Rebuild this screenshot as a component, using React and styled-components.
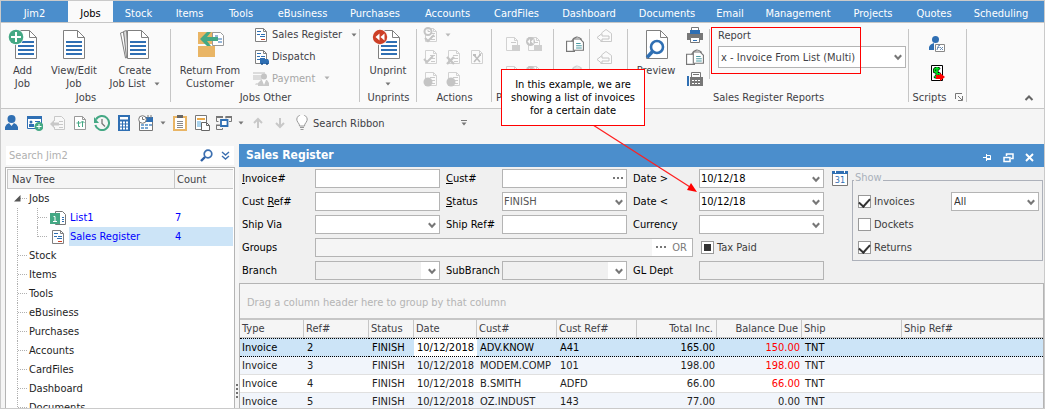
import styled, { createGlobalStyle } from "styled-components";

const theme = {
  blue: "#4b8ecc",
  ink: "#3f3f46",
  iconBlue: "#2f6fb3",
  iconGray: "#808080",
  green: "#44a884",
  line: "#c6c6c6",
  field: "#b4b4b4",
  select: "#cce4f7",
};

const GlobalStyle = createGlobalStyle`
  * {
    box-sizing: border-box;
  }
  body {
    margin: 0;
    font-family: "DejaVu Sans Condensed", "Noto Sans", sans-serif;
    font-size: 11px;
    line-height: 13px;
    color: ${theme.ink};
  }
  button, input, select {
    font: inherit;
    color: inherit;
  }
  svg {
    display: block;
    flex: none;
  }
`;

const Window = styled.div`
  position: relative;
  display: flex;
  flex-direction: column;
  height: 100vh;
  overflow: hidden;
  border: 1px solid #cacaca;
  background: #f5f5f5;
  white-space: nowrap;
`;

/* ---------- tabs ---------- */
const TabBar = styled.nav`
  display: flex;
  height: 21px;
  flex: none;
  background: ${theme.blue};
`;
const Tab = styled.button`
  border: none;
  padding: 4px 0 0;
  width: ${(props) => props.$width}px;
  text-align: center;
  background: ${(props) => (props.$active ? "#fafafa" : "transparent")};
  color: ${(props) => (props.$active ? "#000" : "#fff")};
`;

/* ---------- ribbon ---------- */
const Ribbon = styled.header`
  display: flex;
  height: 87px;
  flex: none;
  background: #fafafa;
  border-top: 1px solid ${theme.line};
  border-bottom: 1px solid ${theme.line};
`;
const Group = styled.section`
  position: relative;
  display: flex;
  flex-direction: column;
  width: ${(props) => props.$width}px;
  flex: none;
  &::after {
    content: "";
    position: absolute;
    right: 0;
    top: 6px;
    bottom: 6px;
    border-right: 1px solid ${theme.line};
  }
`;
const GroupBody = styled.div`
  display: flex;
  flex: 1;
  min-height: 0;
`;
const GroupTitle = styled.div`
  display: flex;
  justify-content: ${(props) => (props.$start ? "flex-start" : "center")};
  align-items: center;
  gap: 9px;
  height: 16px;
  margin-bottom: 3px;
  padding-left: ${(props) => (props.$start ? 4 : 0)}px;
`;
const BigButton = styled.button`
  display: flex;
  flex-direction: column;
  align-items: center;
  width: ${(props) => props.$width}px;
  padding: 5px 0 0;
  border: none;
  background: none;
  white-space: pre;
  svg + span {
    margin-top: 4px;
  }
`;
const ButtonText = styled.span`
  display: flex;
  align-items: center;
  gap: ${(props) => props.$gap || 0}px;
`;
const SmallColumn = styled.div`
  display: flex;
  flex-direction: column;
  padding: 1px 0 0 ${(props) => props.$indent || 0}px;
`;
const SmallButton = styled.button`
  display: flex;
  align-items: center;
  gap: 3px;
  height: 22px;
  padding: 0;
  border: none;
  background: none;
  color: ${(props) => (props.disabled ? "#a6a6a6" : "inherit")};
  svg + svg,
  span + svg {
    margin-left: 6px;
  }
`;
const IconGrid = styled.div`
  display: grid;
  grid-template-columns: repeat(${(props) => props.$cols}, ${(props) => props.$cell || 22}px);
  grid-auto-rows: ${(props) => props.$row || 22}px;
  padding: ${(props) => props.$pad};
`;
const IconButton = styled.button`
  display: flex;
  align-items: center;
  justify-content: ${(props) => (props.$start ? "flex-start" : "center")};
  padding: 0 0 0 ${(props) => (props.$start ? 3 : 0)}px;
  border: none;
  background: none;
  opacity: ${(props) => (props.disabled ? 0.32 : 1)};
`;
const Divider = styled.div`
  width: 1px;
  height: 50px;
  margin-top: 6px;
  background: ${theme.line};
`;
const ReportField = styled.div`
  display: flex;
  flex-direction: column;
  gap: 4px;
  width: 188px;
  margin-left: 8px;
  padding-top: 6px;
`;
const Collapse = styled.button`
  margin: auto 9px 4px auto;
  padding: 0;
  width: 12px;
  height: 12px;
  border: none;
  background: none;
`;

/* ---------- quick access bar ---------- */
const QuickBar = styled.div`
  display: flex;
  align-items: center;
  height: 28px;
  flex: none;
`;
const QuickButton = styled.button`
  display: flex;
  align-items: center;
  justify-content: center;
  width: ${(props) => props.$width || 22}px;
  height: 22px;
  padding: 0;
  border: none;
  background: none;
`;
const RibbonSearch = styled.span`
  width: 145px;
`;

/* ---------- body ---------- */
const Body = styled.div`
  display: flex;
  flex: 1;
  min-height: 0;
  padding-top: 7px;
`;
const Sidebar = styled.aside`
  display: flex;
  flex-direction: column;
  width: 230px;
  margin-left: 4px;
  flex: none;
  padding-top: 2px;
`;
const SearchBox = styled.div`
  display: flex;
  align-items: center;
  height: 19px;
  margin: 0 1px 2px;
  padding-right: 4px;
  gap: 8px;
  background: #fff;
  input {
    flex: 1;
    min-width: 0;
    padding: 0 3px;
    border: none;
    background: none;
    outline: none;
  }
  input::placeholder {
    color: #b0b0b0;
    opacity: 1;
  }
`;
const Tree = styled.div`
  flex: 1;
  min-height: 0;
  overflow: hidden;
  border: 1px solid ${theme.field};
  border-bottom: none;
  background: #fff;
`;
const TreeHead = styled.div`
  display: grid;
  grid-template-columns: 166px 1fr;
  height: 20px;
  margin: 1px 1px 0;
  border: 1px solid ${theme.line};
  border-right: none;
  background: #f5f5f5;
  span {
    padding: 3px 0 0 4px;
  }
  span + span {
    padding-left: 2px;
    border-left: 1px solid ${theme.line};
  }
`;
const TreeRow = styled.div`
  display: flex;
  height: 19px;
  color: #1e1e1e;
`;
const Guide = styled.span`
  position: relative;
  width: 10px;
  margin-left: ${(props) => props.$indent}px;
  height: ${(props) => (props.$last ? 10 : 19)}px;
  border-left: 1px dotted ${(props) => (props.$bare ? "transparent" : "#b0b0b0")};
  &::after {
    content: "";
    position: absolute;
    left: 0;
    top: 9px;
    width: 9px;
    border-top: 1px dotted #b0b0b0;
  }
  svg {
    position: absolute;
    left: -4px;
    top: 6px;
    z-index: 1;
  }
`;
const Trunk = styled.span`
  width: 20px;
  margin-left: 11px;
  border-left: 1px dotted #b0b0b0;
`;
const TreeText = styled.span`
  padding: 3px 0 0 2px;
`;
const LeafIcon = styled.span`
  display: flex;
  align-items: center;
  justify-content: center;
  width: 22px;
`;
const LeafText = styled.span`
  display: grid;
  grid-template-columns: 105px 1fr;
  flex: 1;
  margin-right: 1px;
  padding: 3px 0 0 1px;
  color: #0000ff;
  background: ${(props) => (props.$selected ? theme.select : "transparent")};
`;
const Splitter = styled.div`
  display: flex;
  flex-direction: column;
  align-items: center;
  justify-content: flex-end;
  gap: 2px;
  width: 4px;
  padding-bottom: 10px;
  span {
    width: 2px;
    height: 2px;
    background: #707070;
  }
`;

const Main = styled.main`
  display: flex;
  flex-direction: column;
  flex: 1;
  min-width: 0;
`;
const TitleBar = styled.div`
  display: flex;
  align-items: center;
  height: 23px;
  flex: none;
  padding: 0 10px 0 7px;
  background: ${theme.blue};
  color: #fff;
  h1 {
    flex: 1;
    margin: 0;
    font-size: 12px;
    font-weight: 700;
  }
`;
const WindowButtons = styled.div`
  display: flex;
  align-items: center;
  gap: 11px;
  padding-top: 4px;
  button {
    padding: 0;
    border: none;
    background: none;
  }
`;
const Filters = styled.form`
  display: flex;
  height: 116px;
  flex: none;
  padding: 2px 0 0 3px;
  background: #f0f0f0;
  color: #000;
`;
const Fields = styled.div`
  display: grid;
  grid-template-columns: 67px 125px 50px 125px 60px 125px;
  grid-auto-rows: 19px;
  gap: 4px 6px;
  label {
    padding-top: 3px;
  }
`;
const TextInput = styled.input`
  width: 100%;
  height: 19px;
  padding: 0 2px;
  border: 1px solid ${theme.field};
  background: ${(props) => (props.disabled ? "#f0f0f0" : "#fff")};
  outline: none;
`;
const SelectBox = styled.span`
  position: relative;
  display: block;
  height: ${(props) => props.$height || 19}px;
  select {
    appearance: none;
    width: 100%;
    height: 100%;
    padding: 0 18px 0 ${(props) => (props.$indent ? 2 : 1)}px;
    border: 1px solid ${theme.field};
    border-radius: 0;
    outline: none;
    opacity: 1;
    background: ${(props) =>
      props.$off ? "linear-gradient(to left, #fff 18px, #f0f0f0 18px)" : "#fff"};
    color: ${(props) => props.$color || "#000"};
  }
  svg {
    position: absolute;
    right: 4px;
    top: calc(50% - 3px);
    pointer-events: none;
  }
`;
const DotsBox = styled.span`
  position: relative;
  display: block;
  button {
    position: absolute;
    right: 3px;
    top: 8px;
    padding: 0;
    border: none;
    background: none;
  }
`;
const GroupsBox = styled.span`
  display: flex;
  grid-column: span 4;
  height: 19px;
  border: 1px solid ${theme.field};
  background: #fff;
  color: #7a7a7a;
  input {
    flex: 1;
    min-width: 0;
    border: none;
    background: #f5f5f5;
  }
  button {
    display: flex;
    align-items: center;
    gap: 5px;
    padding: 0 5px 0 4px;
    border: none;
    background: none;
  }
`;
const Check = styled.label`
  display: flex;
  align-items: center;
  gap: 3px;
  color: #3c3c3c;
  input {
    appearance: none;
    display: grid;
    place-items: center;
    width: 13px;
    height: 13px;
    margin: 0;
    border: 1px solid #999;
    background: #fff;
  }
  input:checked::after {
    content: "";
    width: 5px;
    height: 9px;
    margin-bottom: 3px;
    border: solid #333;
    border-width: 0 2px 2px 0;
    transform: rotate(42deg);
  }
  &.mixed {
    padding: 0 0 0 2px;
  }
  &.mixed input::after {
    width: 7px;
    height: 7px;
    margin: 0;
    border: none;
    background: #333;
    transform: none;
  }
`;
const CalendarButton = styled.button`
  align-self: flex-start;
  margin: 1px 4px 0 8px;
  padding: 0;
  border: none;
  background: none;
`;
const Show = styled.fieldset`
  flex: 1;
  align-self: flex-start;
  display: grid;
  grid-template-columns: 89px 1fr;
  grid-auto-rows: 19px;
  gap: 4px;
  min-width: 0;
  height: 90px;
  margin: 2px 1px 0 0;
  padding: 2px 3px 0 5px;
  border: 1px solid #adb1ba;
  legend {
    margin-left: -4px;
    padding: 0 1px 6px;
    color: #a9b0bb;
  }
`;

/* ---------- grid ---------- */
const GridPanel = styled.div`
  flex: 1;
  min-height: 0;
  overflow: hidden;
  border: 1px solid ${theme.field};
  border-bottom: none;
  background: #fff;
`;
const GroupHint = styled.div`
  height: 36px;
  padding: 12px 0 0 7px;
  border-bottom: 2px solid ${theme.line};
  background: #f5f5f5;
  color: #b4b4b4;
`;
const Table = styled.table`
  width: 100%;
  table-layout: fixed;
  border-collapse: separate;
  border-spacing: 0;
  th {
    height: 18px;
    padding: 0 3px 0 2px;
    border-right: 1px solid ${theme.line};
    border-bottom: 1px solid ${theme.line};
    background: #f5f5f5;
    font-weight: 400;
    text-align: left;
  }
  th:last-child {
    border-right: none;
  }
  td {
    height: 18px;
    padding: 0 2px 0 3px;
    border-bottom: 1px solid #e0e0e0;
    color: #1e1e1e;
  }
  th:first-child,
  td:first-child {
    padding-left: 2px;
  }
  th.num,
  td.num {
    text-align: right;
  }
`;
const DataRow = styled.tr`
  background: ${(props) => (props.$selected ? theme.select : props.$alt ? "#f1f5fb" : "#fff")};
  && td {
    ${(props) =>
      props.$selected &&
      "height: 19px; border-top: 1px dotted #000; border-bottom: 1px dotted #000; color: #000;"}
  }
  && td:nth-child(4) {
    ${(props) => props.$selected && "background: #fff;"}
  }
  && td.due {
    color: #ff0000;
  }
`;

/* ---------- annotations ---------- */
const Highlight = styled.div`
  position: absolute;
  left: 710px;
  top: 26px;
  width: 150px;
  height: 47px;
  border: 1px solid #ff0000;
  pointer-events: none;
`;
const Callout = styled.div`
  position: absolute;
  left: 500px;
  top: 68px;
  width: 144px;
  padding: 8px 0;
  border: 1px solid #ff0000;
  background: #fff;
  color: #000;
  text-align: center;
`;
const Pointer = styled.svg`
  position: absolute;
  left: 590px;
  top: 123px;
  pointer-events: none;
`;

/* ---------- icons ---------- */
const Arrow = ({ color = "#777" }) => (
  <svg width="6" height="4" viewBox="0 0 6 4">
    <path d="M0.5 0.5h5L3 3.5z" fill={color} />
  </svg>
);

const Chevron = () => (
  <svg width="8" height="7" viewBox="0 0 8 7">
    <path d="M0.8 1.2L4 4.6 7.2 1.2" fill="none" stroke="#777" strokeWidth="2.1" />
  </svg>
);

const Dots = () => (
  <svg width="11" height="3" viewBox="0 0 11 3">
    <path d="M0 0h2v2H0zM4 0h2v2H4zM8 0h2v2H8z" fill="#777" />
  </svg>
);

const page = "M0.5 0.5h14l7 7v21H0.5z";

const Page = ({ x = 0, lines = true }) => (
  <g transform={`translate(${x} 2)`}>
    <path d={page} fill="#fff" stroke={theme.iconGray} />
    <path d="M14.5 0.5v7h7" fill="none" stroke={theme.iconGray} />
    {lines && <path d="M3 12h16M3 16h16M3 20h16M3 24h16" stroke={theme.iconBlue} strokeWidth="2" />}
  </g>
);

const AddJobIcon = () => (
  <svg width="32" height="32" viewBox="0 0 32 32">
    <Page x={8} />
    <circle cx="9" cy="9" r="8" fill="#fafafa" />
    <circle cx="9" cy="9" r="7.3" fill={theme.green} />
    <path d="M9 4v10M4 9h10" stroke="#fff" strokeWidth="2" />
  </svg>
);

const EditJobIcon = () => (
  <svg width="32" height="32" viewBox="0 0 32 32">
    <Page x={5} />
  </svg>
);

const JobListIcon = () => (
  <svg width="32" height="32" viewBox="0 0 32 32">
    <path d="M1.5 5l3-1 5 25-3 1z" fill="#fff" stroke={theme.iconGray} />
    <path d="M4.500 3.500l3-1 2 27h-2z" fill="#ddd" stroke={theme.iconGray} />
    <Page x={8} />
  </svg>
);

const UnprintIcon = () => (
  <svg width="32" height="32" viewBox="0 0 32 32">
    <Page x={6} />
    <circle cx="8" cy="9" r="8" fill="#fafafa" />
    <circle cx="8" cy="9" r="7.2" fill="#cd4027" />
    <path d="M7.5 5.5v7L3.5 9zM12.5 5.5v7L8.5 9z" fill="#fff" />
  </svg>
);

const ReturnIcon = () => (
  <svg width="32" height="32" viewBox="0 0 32 32">
    <path d="M4 4h17v12H4zM4 18h17v11H4z" fill="#e9b565" />
    <path d="M18.5 4.5h8l3 3v10h-11z" fill="#fff" stroke="#999" />
    <path d="M21 8h3M24 11h4M24 14h4" stroke={theme.iconBlue} />
    <path d="M6 11l7-7h4l-4 5h11v4H13l4 5h-4z" fill={theme.green} />
  </svg>
);

const PreviewIcon = () => (
  <svg width="32" height="32" viewBox="0 0 32 32">
    <Page x={6} lines={false} />
    <circle cx="17" cy="19" r="6" fill="#fff" stroke={theme.iconBlue} strokeWidth="2.6" />
    <path d="M12.5 23.5L7 29.5" stroke={theme.iconBlue} strokeWidth="3.4" />
  </svg>
);

const SmallPage = ({ children, stroke = theme.iconGray }) => (
  <>
    <path d="M2.5 1.5h8l3 3v10h-11z" fill="#fff" stroke={stroke} />
    <path d="M10.5 1.5v3h3" fill="none" stroke={stroke} />
    {children}
  </>
);

const Small = ({ children, size = 16 }) => (
  <svg width={size} height={size} viewBox="0 0 16 16">
    {children}
  </svg>
);

const RegisterIcon = () => (
  <Small>
    <SmallPage>
      <path d="M4 4.5h4M4 7.5h3M8 7.5h4M7 9.5h5" stroke={theme.iconBlue} />
      <path d="M8 12.5h4" stroke="#cd4027" />
    </SmallPage>
  </Small>
);

const DispatchIcon = () => (
  <Small>
    <SmallPage>
      <path d="M4 4.5h4M4 7.5h3M8 7.5h4M4 10.5h3" stroke={theme.iconBlue} />
    </SmallPage>
    <path d="M7 9h5v1h3l1 2v3H7z" fill={theme.iconBlue} />
    <circle cx="9" cy="15" r="1" fill="#1f4f86" />
    <circle cx="14" cy="15" r="1" fill="#1f4f86" />
  </Small>
);

const PaymentIcon = () => (
  <Small>
    <path d="M0 2h12v2H0zM0 5h9v5H0z" fill="#dcdcdc" />
    <path d="M3 13h3v2H2z" fill="#dcdcdc" />
    <circle cx="11" cy="6.5" r="3" fill="#c4c4c4" />
    <path d="M5 16v-3l3-3h6l2 3v3z" fill="#c9c9c9" />
    <path d="M9 10l2 5 2-5z" fill="#fff" />
  </Small>
);

const ActionIcon = ({ mark }) => (
  <Small>
    <SmallPage>
      <path d="M7 6.5h5M8 9.5h4M8 12.5h4" stroke="#666" />
    </SmallPage>
    {mark === "clock" && (
      <>
        <circle cx="5" cy="4.5" r="3.5" fill="#fff" stroke="#555" strokeWidth="2" />
        <path d="M5 2.5v2h2" fill="none" stroke="#555" />
        <path d="M2 11l3 3 6-6" fill="none" stroke="#555" strokeWidth="2" />
      </>
    )}
    {mark === "check" && <path d="M1 10l3 3 6-6" fill="none" stroke="#555" strokeWidth="2" />}
    {mark === "cross" && <path d="M1 8l7 7M8 8l-7 7" stroke="#555" strokeWidth="2.4" />}
    {mark === "dot" && <circle cx="5" cy="11" r="4.5" fill="#555" />}
    {mark === "tools" && (
      <>
        <path d="M3.5 5h9v9h-9z" fill="#fff" />
        <path d="M5 6l6 7M11 6l-6 7" stroke="#444" strokeWidth="1.6" />
        <path d="M4 5h3v2H4zM10 5h2v2h-2z" fill="#444" />
      </>
    )}
    {mark === "print" && <path d="M8 9h8v6H8z" fill="#777" />}
    {mark === "unprint" && (
      <>
        <path d="M8 9h8v6H8z" fill="#777" />
        <circle cx="4.5" cy="5.5" r="4.5" fill="#555" />
        <path d="M4 3v5L1.5 5.5zM7.5 3v5L5 5.5z" fill="#fff" />
      </>
    )}
  </Small>
);

const AttachIcon = () => (
  <Small size={18}>
    <path d="M0.5 5.5h7v9h-7z" fill="#fff" stroke="#777" />
    <path d="M5 5.5Q9 -1 14 4" fill="none" stroke="#777" />
    <path d="M6.5 3.5h6l3 3v7h-9z" fill="#fff" stroke="#777" />
    <path d="M9 7.5h4M9 9.5h5M9 11.5h5" stroke="#4d9ba3" />
  </Small>
);

const ReplyIcon = () => (
  <Small>
    <path d="M4.5 5L9 1.5l5.5 4v8h-11" fill="#fff" stroke="#666" />
    <path d="M0 9.5l5-4v2.5h7v3H5v2.5z" fill="#fff" stroke="#555" />
  </Small>
);

const PrinterIcon = () => (
  <Small>
    <path d="M4.5 0.5h7v5h-7z" fill="#fff" stroke="#777" />
    <path d="M0 6h16v7H0z" fill="#777" />
    <path d="M3 3h10v4H3z" fill={theme.iconBlue} />
    <path d="M3.5 10.5h9v5h-9z" fill="#fff" stroke="#777" />
    <path d="M6 13.5h4" stroke={theme.iconBlue} />
  </Small>
);

const FaxIcon = () => (
  <Small>
    <path d="M0 5h2v10H0z" fill={theme.iconBlue} />
    <path d="M4.5 1.5h9v5h-9z" fill="#fff" stroke="#777" />
    <path d="M6 3.5h6" stroke="#777" />
    <path d="M3 6h13v9H3z" fill="#777" />
    <path d="M5 9.5h9M5 12.5h9" stroke="#fff" strokeDasharray="2 1" />
  </Small>
);

const ScriptIcon = () => (
  <Small>
    <circle cx="6.5" cy="3.5" r="3.5" fill={theme.iconBlue} />
    <path d="M0 14V11q1-3 5-4v7z" fill={theme.iconBlue} />
    <path d="M6.5 8.5h9v7h-9z" fill="#fff" stroke="#888" />
    <path d="M8 14l1.5-4.5H11M8.5 11.5h2M11 11l3 3M14 11l-3 3" fill="none" stroke="#6d8fb5" />
  </Small>
);

const MoneyIcon = () => (
  <Small>
    <path d="M2.5 0.5h11v15h-11z" fill="#fff" stroke="#000" />
    <path
      d="M10.5 4.5L9.500 3.500H6.500L5.500 4.500v2l5 2.500v2L9.500 12H6.500l-1-1M8 2v11.500"
      fill="none"
      stroke="#000"
      strokeWidth="3"
    />
    <path
      d="M10.5 4.5L9.500 3.500H6.500L5.500 4.500v2l5 2.500v2L9.500 12H6.500l-1-1M8 2v11.500"
      fill="none"
      stroke="#00e020"
      strokeWidth="1.7"
    />
    <path d="M7 10h4V8l5 4-5 4v-2H7z" fill="#f00" />
  </Small>
);

const LauncherIcon = () => (
  <svg width="8" height="8" viewBox="0 0 8 8">
    <path d="M0.5 6V0.5H7" fill="none" stroke="#777" />
    <path d="M7.5 3v4.5H3M3 3l4 4" fill="none" stroke="#777" />
  </svg>
);

const quickIcons = {
  user: (
    <>
      <circle cx="7.5" cy="4" r="4" fill={theme.iconBlue} />
      <path d="M1 15v-3q1-3 4-4l2.500 3L10 8q3 1 4 4v3z" fill={theme.iconBlue} />
    </>
  ),
  card: (
    <>
      <path d="M0.5 1.5h14v12h-14z" fill="#fff" stroke={theme.iconBlue} />
      <path d="M0 1h15v3H0z" fill={theme.iconBlue} />
      <circle cx="4" cy="7" r="1.5" fill={theme.iconBlue} />
      <path d="M2 12V9h5v3zM8 6h5v1H8z" fill={theme.iconBlue} />
      <circle cx="12" cy="11.5" r="4.500" fill={theme.green} />
      <path d="M12 9v5M9.5 11.500h5" stroke="#fff" />
    </>
  ),
  back: (
    <g opacity="0.35">
      <path d="M4.5 6V1.5h7l3 3v10h-10V12" fill="#fff" stroke="#777" />
      <path d="M9 6.5h4M9 9.5h4M9 12.5h4" stroke="#777" />
      <path d="M0 9l4-4v2.500h5v3H4V13z" fill="#777" />
    </g>
  ),
  refresh: (
    <>
      <SmallPage stroke="#999" />
      <path d="M6.5 6v5.500h1.500M4.500 8h4M10.500 12V6.500M8.500 8l2-2 2 2" fill="none" stroke={theme.green} />
    </>
  ),
  history: (
    <>
      <path d="M2 4.5A7 7 0 1 1 1.3 10" fill="none" stroke={theme.green} strokeWidth="2" />
      <path d="M0 2v6h5z" fill={theme.green} />
      <path d="M8 4v4.5l3 3" fill="none" stroke="#777" strokeWidth="1.3" />
    </>
  ),
  calc: (
    <>
      <path d="M2 0h12v16H2z" fill={theme.iconBlue} />
      <path d="M4 2h8v2.500H4z" fill="#fff" />
      <path d="M4 7.5h8M4 10.5h8M4 13.5h8" stroke="#fff" strokeWidth="2" strokeDasharray="2 1" />
    </>
  ),
  schedule: (
    <>
      <path d="M1.5 3.5h13v12h-13z" fill="#fff" stroke="#777" />
      <path d="M8 2h7v5H8z" fill={theme.iconBlue} />
      <path d="M10 0v3M13 0v3" stroke="#777" />
      <circle cx="4.5" cy="4.5" r="3.8" fill="#fff" stroke="#777" />
      <path d="M4.5 2v2.500h2" fill="none" stroke="#777" />
      <path d="M3 9h3v2H3zM7 9h3v2H7zM11 9h3v2h-3zM3 12h3v2H3zM7 12h3v2H7z" fill="#7da9d3" />
    </>
  ),
  clipboard: (
    <>
      <path d="M2 2h12v13H2z" fill="#fff" stroke="#e9b565" strokeWidth="2" />
      <path d="M5 0h6v3H5z" fill="#666" />
      <path d="M5 6.5h6M5 8.5h6M5 10.5h6M5 12.5h6" stroke="#888" />
    </>
  ),
  report: (
    <>
      <path d="M1.5 0.5h11v14h-11z" fill="#fff" stroke="#777" />
      <path d="M3 3h8v2H3z" fill="#e9a94a" />
      <path d="M3 6h4v6H3z" fill="#a9d3ee" />
      <path d="M7.5 7.5h5l3 3v5h-8z" fill="#fff" stroke="#666" />
      <path d="M12.5 7.5v3h3" fill="none" stroke="#666" />
    </>
  ),
  windows: (
    <>
      <path
        d="M2.500 6.500h-2v-5h6V3M10 3.500V1.500h5.500v5H13M0.500 10v4.500h6V13"
        fill="none"
        stroke="#777"
      />
      <path d="M0 1h7v2H0zM9.500 1h6.500v2H9.500zM0 9.500h4v1.500H0z" fill="#777" />
      <path d="M5 5h6.500v6H5z" fill="#fff" stroke={theme.iconBlue} strokeWidth="1.800" />
    </>
  ),
  up: <path d="M8 13V4.5M4 8l4-4 4 4" fill="none" stroke="#c8c8c8" strokeWidth="2" />,
  down: <path d="M8 3v8.500M4 8l4 4 4-4" fill="none" stroke="#c8c8c8" strokeWidth="2" />,
  bulb: (
    <>
      <path d="M5.5 11Q5.5 9 4 7.5A5 5 0 1 1 12 7.5Q10.5 9 10.5 11z" fill="#fff" stroke="#999" />
      <path d="M6 12.5h4M6.5 14.5h3" stroke="#999" />
    </>
  ),
};

/* ---------- data ---------- */
const tabs = [
  ["Jim2", 67],
  ["Jobs", 45],
  ["Stock", 51],
  ["Items", 51],
  ["Tools", 52],
  ["eBusiness", 71],
  ["Purchases", 74],
  ["Accounts", 71],
  ["CardFiles", 67],
  ["Dashboard", 78],
  ["Documents", 78],
  ["Email", 48],
  ["Management", 88],
  ["Projects", 62],
  ["Quotes", 60],
  ["Scheduling", 74],
];

const modules = ["Stock", "Items", "Tools", "eBusiness", "Purchases", "Accounts", "CardFiles", "Dashboard", "Documents"];

const columns = [
  ["Type", 64],
  ["Ref#", 65],
  ["Status", 45],
  ["Date", 63],
  ["Cust#", 80],
  ["Cust Ref#", 80],
  ["Total Inc.", 80],
  ["Balance Due", 85],
  ["Ship", 100],
  ["Ship Ref#"],
];

const invoices = [
  ["2", "ADV.KNOW", "A41", "165.00", "150.00"],
  ["3", "MODEM.COMP", "101", "198.00", "198.00"],
  ["4", "B.SMITH", "ADFD", "66.00", "66.00"],
  ["5", "OZ.INDUST", "143", "77.00", "0.00"],
];

const Combo = ({ id, value = "", label, ...rest }) => (
  <SelectBox {...rest}>
    <select id={id} aria-label={label} disabled={rest.$off} defaultValue={value}>
      <option>{value}</option>
    </select>
    <Chevron />
  </SelectBox>
);

const QuickIcon = ({ name, width }) => (
  <QuickButton $width={width} aria-label={name}>
    <Small>{quickIcons[name]}</Small>
  </QuickButton>
);

const RibbonBar = () => (
  <Ribbon>
    <Group $width={170}>
      <GroupBody>
        <BigButton $width={43}>
          <AddJobIcon />
          <span>Add</span>
          <span>Job</span>
        </BigButton>
        <BigButton $width={60}>
          <EditJobIcon />
          <span>View/Edit</span>
          <span>Job</span>
        </BigButton>
        <BigButton $width={62}>
          <JobListIcon />
          <span>Create</span>
          <ButtonText $gap={6}>
            Job List <Arrow />
          </ButtonText>
        </BigButton>
      </GroupBody>
      <GroupTitle>Jobs</GroupTitle>
    </Group>

    <Group $width={189}>
      <GroupBody>
        <BigButton $width={78}>
          <ReturnIcon />
          <span>Return From</span>
          <span>Customer</span>
        </BigButton>
        <SmallColumn $indent={4}>
          <SmallButton>
            <RegisterIcon />
            <span>Sales Register</span>
            <Arrow />
          </SmallButton>
          <SmallButton>
            <DispatchIcon />
            <span>Dispatch</span>
          </SmallButton>
          <SmallButton disabled>
            <PaymentIcon />
            <span>Payment</span>
            <Arrow color="#b0b0b0" />
          </SmallButton>
        </SmallColumn>
      </GroupBody>
      <GroupTitle>Jobs Other</GroupTitle>
    </Group>

    <Group $width={57}>
      <GroupBody>
        <BigButton $width={56}>
          <UnprintIcon />
          <span>Unprint</span>
          <ButtonText>
            &#8203;
            <Arrow />
          </ButtonText>
        </BigButton>
      </GroupBody>
      <GroupTitle>Unprints</GroupTitle>
    </Group>

    <Group $width={75}>
      <GroupBody>
        <IconGrid $cols={3} $cell={23} $pad="1px 0 0 2px">
          <IconButton disabled aria-label="Schedule">
            <ActionIcon mark="clock" />
          </IconButton>
          <IconButton disabled $start aria-label="More">
            <Arrow color="#333" />
          </IconButton>
          <span />
          <IconButton disabled aria-label="Accept">
            <ActionIcon mark="check" />
          </IconButton>
          <IconButton disabled aria-label="Reject">
            <ActionIcon mark="cross" />
          </IconButton>
          <IconButton disabled aria-label="Tools">
            <ActionIcon mark="tools" />
          </IconButton>
          <IconButton disabled aria-label="Record">
            <ActionIcon mark="dot" />
          </IconButton>
          <IconButton disabled aria-label="Stop">
            <ActionIcon mark="dot" />
          </IconButton>
        </IconGrid>
      </GroupBody>
      <GroupTitle>Actions</GroupTitle>
    </Group>

    <Group $width={62}>
      <GroupBody>
        <IconGrid $cols={2} $row={29} $pad="6px 0 0 9px">
          <IconButton disabled aria-label="Print">
            <ActionIcon mark="print" />
          </IconButton>
          <IconButton disabled aria-label="Undo print">
            <ActionIcon mark="unprint" />
          </IconButton>
          <IconButton disabled aria-label="Print all">
            <ActionIcon mark="print" />
          </IconButton>
          <IconButton disabled aria-label="Undo all">
            <ActionIcon mark="unprint" />
          </IconButton>
        </IconGrid>
      </GroupBody>
      <GroupTitle $start>P</GroupTitle>
    </Group>

    <Group $width={74}>
      <GroupBody>
        <IconGrid $cols={1} $row={29} $pad="6px 3px 0 10px">
          <IconButton aria-label="Copy">
            <AttachIcon />
          </IconButton>
          <IconButton disabled aria-label="Paste">
            <AttachIcon />
          </IconButton>
        </IconGrid>
        <Divider />
        <IconGrid $cols={1} $pad="2px 0 0 4px">
          <IconButton disabled aria-label="Reply">
            <ReplyIcon />
          </IconButton>
          <IconButton disabled aria-label="Reply all">
            <ReplyIcon />
          </IconButton>
        </IconGrid>
      </GroupBody>
    </Group>

    <Group $width={281}>
      <GroupBody>
        <BigButton $width={56}>
          <PreviewIcon />
          <span>Preview</span>
        </BigButton>
        <IconGrid $cols={1} $pad="1px 3px 0 0">
          <IconButton aria-label="Print report">
            <PrinterIcon />
          </IconButton>
          <IconButton aria-label="Email report">
            <AttachIcon />
          </IconButton>
          <IconButton aria-label="Fax report">
            <FaxIcon />
          </IconButton>
        </IconGrid>
        <Divider />
        <ReportField>
          <label htmlFor="report">Report</label>
          <Combo
            id="report"
            value="x - Invoice From List (Multi)"
            $indent
            $height={22}
            $color={theme.ink}
          />
        </ReportField>
      </GroupBody>
      <GroupTitle>Sales Register Reports</GroupTitle>
    </Group>

    <Group $width={58}>
      <GroupBody>
        <IconGrid $cols={1} $row={29} $pad="6px 0 0 17px">
          <IconButton aria-label="User script">
            <ScriptIcon />
          </IconButton>
          <IconButton aria-label="Money script">
            <MoneyIcon />
          </IconButton>
        </IconGrid>
      </GroupBody>
      <GroupTitle>
        Scripts <LauncherIcon />
      </GroupTitle>
    </Group>

    <Collapse aria-label="Collapse ribbon">
      <svg width="12" height="10" viewBox="0 0 12 10">
        <path d="M2.5 7L6 3.5 9.5 7" fill="none" stroke="#666" strokeWidth="2" />
      </svg>
    </Collapse>
  </Ribbon>
);

const NavPanel = () => (
  <Sidebar>
    <SearchBox>
      <input type="search" placeholder="Search Jim2" aria-label="Search Jim2" />
      <svg width="13" height="13" viewBox="0 0 13 13">
        <circle cx="8" cy="5" r="3.8" fill="none" stroke="#3b6fb0" strokeWidth="1.7" />
        <path d="M5 8L1 12" stroke="#2d5ea3" strokeWidth="2.4" />
      </svg>
      <svg width="9" height="9" viewBox="0 0 9 9">
        <path d="M1 1l3.5 3L8 1M1 5l3.5 3L8 5" fill="none" stroke="#3b6fb0" strokeWidth="1.4" />
      </svg>
    </SearchBox>
    <Tree>
      <TreeHead>
        <span>Nav Tree</span>
        <span>Count</span>
      </TreeHead>
      <TreeRow>
        <Guide $indent={11} $bare>
          <svg width="7" height="7" viewBox="0 0 7 7">
            <path d="M6.5 0v6.5H0z" fill="#555" />
          </svg>
        </Guide>
        <TreeText>Jobs</TreeText>
      </TreeRow>
      <TreeRow>
        <Trunk />
        <Guide $indent={0} />
        <LeafIcon>
          <Small>
            <path d="M5.5 1.5h7l3 3v10h-10z" fill="#fff" stroke="#777" />
            <path d="M12 7.5h2M12 9.5h2M12 11.5h2" stroke={theme.iconBlue} />
            <path d="M0 3h10v11H0z" fill={theme.green} />
            <path d="M3.5 6.5h1.500v5M3 11.5h4" fill="none" stroke="#fff" />
          </Small>
        </LeafIcon>
        <LeafText>
          <span>List1</span>
          <span>7</span>
        </LeafText>
      </TreeRow>
      <TreeRow>
        <Trunk />
        <Guide $indent={0} $last />
        <LeafIcon>
          <RegisterIcon />
        </LeafIcon>
        <LeafText $selected>
          <span>Sales Register</span>
          <span>4</span>
        </LeafText>
      </TreeRow>
      {modules.map((name) => (
        <TreeRow key={name}>
          <Guide $indent={11} />
          <TreeText>{name}</TreeText>
        </TreeRow>
      ))}
    </Tree>
  </Sidebar>
);

const FilterForm = () => (
  <Filters onSubmit={(e) => e.preventDefault()}>
    <Fields>
      <label htmlFor="invoice">
        <u>I</u>nvoice#
      </label>
      <TextInput id="invoice" />
      <label htmlFor="cust">
        <u>C</u>ust#
      </label>
      <DotsBox>
        <TextInput id="cust" />
        <button type="button" aria-label="Find customer">
          <Dots />
        </button>
      </DotsBox>
      <label htmlFor="dateFrom">Date &gt;</label>
      <Combo id="dateFrom" value="10/12/18" />

      <label htmlFor="custRef">
        Cust <u>R</u>ef#
      </label>
      <TextInput id="custRef" />
      <label htmlFor="status">
        <u>S</u>tatus
      </label>
      <Combo id="status" value="FINISH" $color="#555" />
      <label htmlFor="dateTo">Date &lt;</label>
      <Combo id="dateTo" value="10/12/18" />

      <label htmlFor="shipVia">Ship Via</label>
      <Combo id="shipVia" />
      <label htmlFor="shipRef">Ship Ref#</label>
      <TextInput id="shipRef" />
      <label htmlFor="currency">Currency</label>
      <Combo id="currency" />

      <label htmlFor="groups">Groups</label>
      <GroupsBox>
        <input id="groups" />
        <button type="button">
          <Dots />
          OR
        </button>
      </GroupsBox>
      <Check className="mixed">
        <input type="checkbox" defaultChecked />
        Tax Paid
      </Check>

      <label htmlFor="branch">Branch</label>
      <Combo id="branch" $off />
      <label htmlFor="subBranch">SubBranch</label>
      <Combo id="subBranch" $off />
      <label htmlFor="glDept">GL Dept</label>
      <TextInput id="glDept" disabled />
    </Fields>
    <CalendarButton type="button" aria-label="Pick dates">
      <svg width="16" height="16" viewBox="0 0 16 16">
        <path d="M0.5 2.5h15v13H0.5z" fill="#fff" stroke="#777" />
        <path d="M0 1h16v3H0z" fill={theme.iconBlue} />
        <path d="M3.5 0v3M12.5 0v3" stroke="#fff" />
        <text x="8" y="13" textAnchor="middle" fontSize="9" fill={theme.iconBlue}>
          31
        </text>
      </svg>
    </CalendarButton>
    <Show>
      <legend>Show</legend>
      <Check>
        <input type="checkbox" defaultChecked />
        Invoices
      </Check>
      <Combo label="Invoice type" value="All" $indent $color="#333" />
      <Check>
        <input type="checkbox" />
        Dockets
      </Check>
      <span />
      <Check>
        <input type="checkbox" defaultChecked />
        Returns
      </Check>
    </Show>
  </Filters>
);

const InvoiceGrid = () => (
  <GridPanel>
    <GroupHint>Drag a column header here to group by that column</GroupHint>
    <Table>
      <colgroup>
        {columns.map(([name, width]) => (
          <col key={name} style={{ width }} />
        ))}
      </colgroup>
      <thead>
        <tr>
          {columns.map(([name], i) => (
            <th key={name} className={i === 6 || i === 7 ? "num" : undefined}>
              {name}
            </th>
          ))}
        </tr>
      </thead>
      <tbody>
        {invoices.map(([ref, cust, custRef, total, due], i) => (
          <DataRow key={ref} $selected={i === 0} $alt={i % 2 === 1}>
            <td>Invoice</td>
            <td>{ref}</td>
            <td>FINISH</td>
            <td>10/12/2018</td>
            <td>{cust}</td>
            <td>{custRef}</td>
            <td className="num">{total}</td>
            <td className={due === "0.00" ? "num" : "num due"}>{due}</td>
            <td>TNT</td>
            <td />
          </DataRow>
        ))}
      </tbody>
    </Table>
  </GridPanel>
);

const App = () => {
  return (
    <>
      <GlobalStyle />
      <Window>
        <TabBar>
          {tabs.map(([name, width]) => (
            <Tab key={name} $width={width} $active={name === "Jobs"}>
              {name}
            </Tab>
          ))}
        </TabBar>
        <RibbonBar />
        <QuickBar>
          <QuickIcon name="user" />
          <QuickIcon name="card" width={24} />
          <QuickIcon name="back" />
          <QuickIcon name="refresh" />
          <QuickIcon name="history" />
          <QuickIcon name="calc" />
          <QuickIcon name="schedule" />
          <QuickButton $width={12} aria-label="Schedule options">
            <Arrow />
          </QuickButton>
          <QuickIcon name="clipboard" />
          <QuickIcon name="report" />
          <QuickIcon name="windows" />
          <QuickButton $width={12} aria-label="Window options">
            <Arrow />
          </QuickButton>
          <QuickIcon name="up" />
          <QuickIcon name="down" />
          <QuickIcon name="bulb" />
          <RibbonSearch>Search Ribbon</RibbonSearch>
          <QuickButton $width={12} aria-label="Customise">
            <svg width="6" height="6" viewBox="0 0 6 6">
              <path d="M0 0.5h6" stroke="#777" />
              <path d="M0.5 2.5h5L3 5.5z" fill="#777" />
            </svg>
          </QuickButton>
        </QuickBar>
        <Body>
          <NavPanel />
          <Splitter>
            <span />
            <span />
            <span />
            <span />
          </Splitter>
          <Main>
            <TitleBar>
              <h1>Sales Register</h1>
              <WindowButtons>
                <button aria-label="Pin">
                  <svg width="9" height="9" viewBox="0 0 9 9">
                    <path d="M0 4.5h3M3.5 1v7M3.5 2.5h4v3h-4" fill="none" stroke="#fff" />
                    <path d="M3 5h5v2H3z" fill="#fff" />
                  </svg>
                </button>
                <button aria-label="Restore">
                  <svg width="11" height="10" viewBox="0 0 11 10">
                    <path d="M3.5 3V1h6.500v4.500H8" fill="none" stroke="#fff" strokeWidth="1.5" />
                    <path d="M1 4.5h6v4H1z" fill="none" stroke="#fff" strokeWidth="1.5" />
                  </svg>
                </button>
                <button aria-label="Close">
                  <svg width="9" height="9" viewBox="0 0 9 9">
                    <path d="M1 1l7 7M8 1L1 8" stroke="#fff" strokeWidth="1.9" />
                  </svg>
                </button>
              </WindowButtons>
            </TitleBar>
            <FilterForm />
            <InvoiceGrid />
          </Main>
        </Body>
        <Highlight />
        <Pointer width="110" height="70" viewBox="0 0 110 70">
          <path d="M2 1L99 63" stroke="#ff2020" strokeWidth="1.3" />
          <path d="M106 68L96 66 100 59z" fill="#f00" />
        </Pointer>
        <Callout>
          In this example, we are
          <br />
          showing a list of invoices
          <br />
          for a certain date
        </Callout>
      </Window>
    </>
  );
};

export default App;
